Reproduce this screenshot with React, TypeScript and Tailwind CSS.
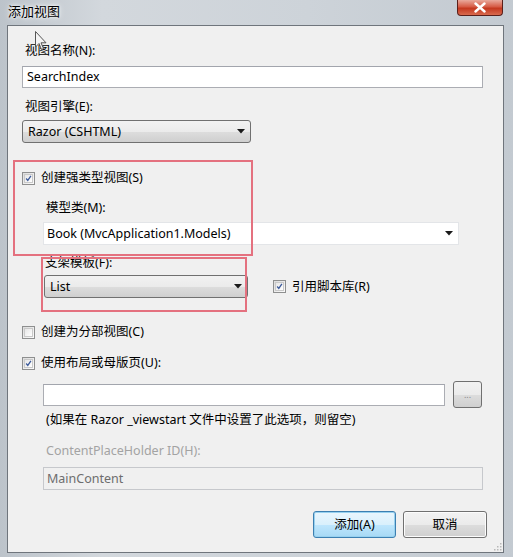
import React from 'react'

const font = { fontFamily: '"Noto Sans", "Noto Sans CJK SC", sans-serif' }

function CheckBox({ checked }: { checked?: boolean }) {
  return (
    <span className="w-[13px] h-[13px] border border-[#8e8f8f] bg-gradient-to-br from-[#dcdcdc] to-[#fbfbfb] flex items-center justify-center shrink-0">
      <span className="w-[9px] h-[9px] border border-[#c9c9c9] bg-gradient-to-br from-[#e6e6e6] to-[#ffffff] flex items-center justify-center">
        {checked && (
          <svg width="9" height="9" viewBox="0 0 9 9">
            <path d="M1.5 4.5 L3.6 7 L7.6 1.2" fill="none" stroke="#3c5a9a" strokeWidth="1.7" />
          </svg>
        )}
      </span>
    </span>
  )
}

function Arrow() {
  return (
    <svg width="8" height="5" viewBox="0 0 8 5" className="shrink-0">
      <path d="M0 0 H8 L4 4.5 Z" fill="#1a1a1a" />
    </svg>
  )
}

function DropDown({ text, className }: { text: string; className: string }) {
  return (
    <div className={`h-[23px] rounded-[3px] border border-[#707070] bg-[linear-gradient(#f2f2f2_0%,#ebebeb_50%,#dddddd_51%,#cfcfcf_100%)] flex items-center justify-between pl-[5px] pr-[5px] text-[12.5px] text-black ${className}`}>
      <span>{text}</span>
      <Arrow />
    </div>
  )
}

export default function App() {
  return (
    <div style={font} className="w-[513px] h-[557px] overflow-hidden flex flex-col bg-[linear-gradient(90deg,#bcc3ca,#d3d8dd_20%,#cdd3d9_60%,#c3cad1)] text-[12.5px] leading-[16px] text-black">
      {/* title bar */}
      <div className="h-[25px] shrink-0 flex items-start justify-between pl-[8px] pr-[10px]">
        <span className="mt-[3px] text-[13px] text-black [text-shadow:0_0_6px_#ffffff,0_0_3px_#ffffff]">添加视图</span>
        <div className="w-[46px] h-[16px] rounded-b-[4px] border border-t-0 border-[#5a1f1a] bg-[linear-gradient(#e9a99c,#d65b45_45%,#c4381f_55%,#d86a4e)] flex items-center justify-center">
          <svg width="12" height="11" viewBox="0 0 12 11">
            <path d="M1.5 1.5 L10.5 9.5 M10.5 1.5 L1.5 9.5" stroke="#ffffff" strokeWidth="2.4" strokeLinecap="round" />
          </svg>
        </div>
      </div>

      {/* client area */}
      <div className="ml-[7px] mr-[9px] h-[528px] shrink-0 border border-[#6f757c] bg-[#f0f0f0]">
        <div className="relative h-full flex flex-col pl-[14px] pr-[16px]">
          <span className="mt-[17px] ml-[3px]">视图名称(N):</span>
          <div className="mt-[7px] w-[461px] h-[22px] border border-[#abadb3] border-t-[#a2a5ad] bg-white flex items-center pl-[4px]">SearchIndex</div>

          <span className="mt-[11px] ml-[3px]">视图引擎(E):</span>
          <DropDown text="Razor (CSHTML)" className="mt-[5px] w-[229px]" />

          <label className="mt-[27px] flex items-center gap-[6px]">
            <CheckBox checked />
            <span>创建强类型视图(S)</span>
          </label>

          <span className="mt-[14px] ml-[24px]">模型类(M):</span>
          <div className="mt-[6px] ml-[21px] w-[416px] h-[23px] border border-[#e3e5e8] bg-white flex items-center justify-between pl-[3px] pr-[5px]">
            <span>Book (MvcApplication1.Models)</span>
            <Arrow />
          </div>

          <span className="mt-[10px] ml-[23px]">支架模板(F):</span>
          <div className="mt-[4px] ml-[22px] flex items-center">
            <DropDown text="List" className="w-[204px]" />
            <label className="ml-[25px] flex items-center gap-[6px]">
              <CheckBox checked />
              <span>引用脚本库(R)</span>
            </label>
          </div>

          <label className="mt-[26px] flex items-center gap-[6px]">
            <CheckBox />
            <span>创建为分部视图(C)</span>
          </label>

          <label className="mt-[15px] flex items-center gap-[6px]">
            <CheckBox checked />
            <span>使用布局或母版页(U):</span>
          </label>

          <div className="mt-[10px] ml-[21px] flex items-center">
            <div className="w-[402px] h-[22px] border border-[#abadb3] border-t-[#a2a5ad] bg-white" />
            <div className="ml-[8px] w-[29px] h-[27px] rounded-[3px] border border-[#707070] bg-[linear-gradient(#f2f2f2_0%,#ebebeb_50%,#dddddd_51%,#cfcfcf_100%)] flex items-center justify-center text-[9px] text-[#8a8a8a] leading-none">...</div>
          </div>

          <span className="mt-[4px] ml-[24px]">(如果在 Razor _viewstart 文件中设置了此选项，则留空)</span>

          <span className="mt-[15px] ml-[24px] text-[#a3a3a3]">ContentPlaceHolder ID(H):</span>
          <div className="mt-[8px] ml-[21px] w-[440px] h-[23px] border border-[#c6c8cc] bg-[#f0f0f0] flex items-center pl-[3px] text-[#6d6d6d]">MainContent</div>

          <div className="mt-[21px] flex justify-end gap-[7px]">
            <button className="w-[83px] h-[27px] rounded-[3px] border border-[#3c7fb1] bg-[linear-gradient(#eaf6fd_0%,#d9f0fc_50%,#bee6fd_51%,#a7d9f5_100%)] shadow-[inset_0_0_0_1px_#98d1ef] text-[12.5px]">添加(A)</button>
            <button className="w-[84px] h-[27px] rounded-[3px] border border-[#707070] bg-[linear-gradient(#f2f2f2_0%,#ebebeb_50%,#dddddd_51%,#cfcfcf_100%)] shadow-[inset_0_0_0_1px_#fcfcfc] text-[12.5px]">取消</button>
          </div>

          {/* resize grip */}
          <svg className="absolute right-[1px] bottom-[1px]" width="10" height="10" viewBox="0 0 10 10">
            {[[8, 2], [8, 5], [5, 5], [8, 8], [5, 8], [2, 8]].map(([x, y]) => (
              <rect key={`${x}-${y}`} x={x} y={y} width="1.5" height="1.5" fill="#b8b8b8" />
            ))}
          </svg>

          {/* annotation rectangles */}
          <div className="absolute left-[5px] top-[134px] w-[240px] h-[96px] border-2 border-[#e4717f]" />
          <div className="absolute left-[33px] top-[231px] w-[206px] h-[55px] border-2 border-[#e4717f]" />

          {/* mouse cursor */}
          <svg className="absolute left-[27px] top-[5px]" width="12" height="20" viewBox="0 0 12 20">
            <path d="M0.5 0.5 L0.5 16 L4 12.5 L6.5 18.5 L8.5 17.5 L6 11.8 L11 11.8 Z" fill="#f4f4f4" stroke="#555" strokeWidth="1" />
          </svg>
        </div>
      </div>
    </div>
  )
}
